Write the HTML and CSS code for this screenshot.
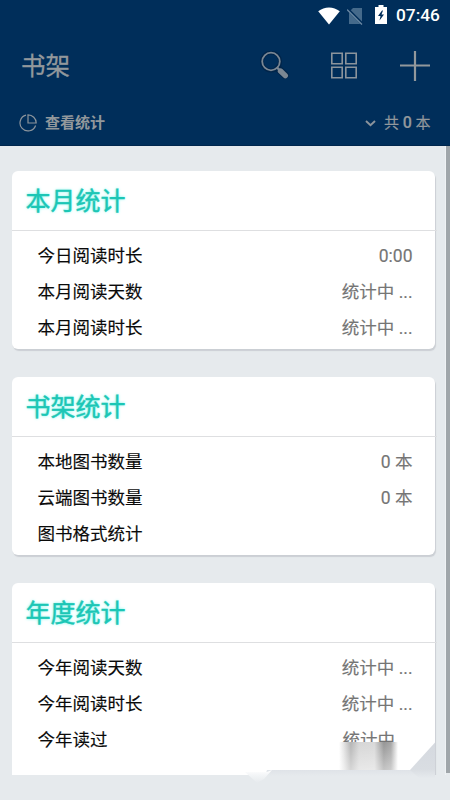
FILE: index.html
```html
<!DOCTYPE html>
<html lang="zh-CN">
<head>
<meta charset="utf-8">
<title>书架</title>
<link rel="stylesheet" href="styles.css">
</head>
<body>
<div class="app">
  <header class="header">
    <div class="status">
      <svg class="wifi" width="22" height="18" viewBox="0 0 22 18"><path d="M0.2 4.3C6.500-.9 15.500-.9 21.800 4.300L11 17.600Z" fill="#fff"/></svg>
      <svg class="sim" width="17" height="18" viewBox="0 0 17 18"><path d="M6 1h9v16H2V5Z" fill="#456a8b"/><path d="M0 1.500L16 17.500" stroke="#002e5a" stroke-width="3"/><path d="M0 2.500L15 17.500" stroke="#6c89a3" stroke-width="1.300"/></svg>
      <svg class="battery" width="12" height="19" viewBox="0 0 12 19"><path d="M3.500 0h5v2H12v17H0V2h3.500Z" fill="#fff"/><path d="M7 5.500L3 11h2.500L4.500 15.500L9 9.500H6.500L8 5.500Z" fill="#002e5a"/></svg>
      <span class="clock">07:46</span>
    </div>
    <div class="toolbar">
      <h1 class="page-title">书架</h1>
      <svg class="search" width="30" height="30" viewBox="0 0 30 30" fill="none"><circle cx="11" cy="10.500" r="9" stroke="#00254a" stroke-width="4"/><path d="M18 17.500L25 24" stroke="#00254a" stroke-width="7.500" stroke-linecap="round"/><circle cx="11" cy="10.500" r="8.800" stroke="#7b8793" stroke-width="1.800"/><path d="M17 16.500L21 20.500" stroke="#7b8793" stroke-width="2.400"/><path d="M20.500 20L25.300 24.600" stroke="#7b8793" stroke-width="5.400" stroke-linecap="round"/></svg>
      <svg class="grid" width="28" height="28" viewBox="0 0 28 28" fill="none" stroke="#8b949c" stroke-width="1.600"><path d="M1.800 1.300h10.400v10.400H1.800ZM15.800 1.300h10.400v10.400H15.800ZM1.800 15.300h10.400v10.400H1.800ZM15.800 15.300h10.400v10.400H15.800Z"/></svg>
      <svg class="plus" width="30" height="30" viewBox="0 0 30 30"><path d="M15 0v30M0 14.500h30" stroke="#92989c" stroke-width="2.200"/></svg>
    </div>
    <div class="summary">
      <svg class="pie" width="18" height="18" viewBox="0 0 18 18" fill="none" stroke="#8b949c" stroke-width="1.200"><path d="M7 1.200A8 8 0 1 0 16.600 11.500"/><path d="M9 .8V9h8.200A8.200 8.200 0 0 0 9 .8Z"/></svg>
      <span class="view">查看统计</span>
      <svg class="chevron" width="11" height="7" viewBox="0 0 11 7" fill="none" stroke="#8b949c" stroke-width="1.900"><path d="M1 1l4.500 4.300L10 1"/></svg>
      <span class="count">共 <b>0</b> 本</span>
    </div>
  </header>
  <main class="content">
    <div class="cards">
      <section class="card">
        <h2>本月统计</h2>
        <ul>
          <li><span>今日阅读时长</span><em>0:00</em></li>
          <li><span>本月阅读天数</span><em>统计中 ...</em></li>
          <li><span>本月阅读时长</span><em>统计中 ...</em></li>
        </ul>
      </section>
      <section class="card">
        <h2>书架统计</h2>
        <ul>
          <li><span>本地图书数量</span><em>0 本</em></li>
          <li><span>云端图书数量</span><em>0 本</em></li>
          <li><span>图书格式统计</span></li>
        </ul>
      </section>
      <section class="card last">
        <h2>年度统计</h2>
        <ul>
          <li><span>今年阅读天数</span><em>统计中 ...</em></li>
          <li><span>今年阅读时长</span><em>统计中 ...</em></li>
          <li><span>今年读过</span><em>统计中</em></li>
        </ul>
      </section>
    </div>
    <div class="scrollbar"></div>
  </main>
  <svg class="fade" width="205" height="64" viewBox="0 0 205 64">
    <defs>
      <linearGradient id="streak" x1="0" x2="1" y1="0" y2="0">
        <stop offset="0" stop-color="#fff"/><stop offset=".08" stop-color="#e4e4e4"/><stop offset=".2" stop-color="#b4b4b4"/><stop offset=".34" stop-color="#d6d6d6"/><stop offset=".6" stop-color="#d8d8d8"/><stop offset=".76" stop-color="#959595"/><stop offset=".88" stop-color="#a5a5a5"/><stop offset="1" stop-color="#fff"/>
      </linearGradient>
      <linearGradient id="lift" x1="0" x2="0" y1="0" y2="1">
        <stop offset="0" stop-color="#fff" stop-opacity="0"/><stop offset="1" stop-color="#fff" stop-opacity=".45"/>
      </linearGradient>
      <linearGradient id="corner" x1="0" x2="0" y1="0" y2="1">
        <stop offset="0" stop-color="#d5d9df"/><stop offset=".75" stop-color="#d9dde2"/><stop offset="1" stop-color="#e6eaed"/>
      </linearGradient>
      <linearGradient id="edge" x1="0" x2="0" y1="0" y2="1">
        <stop offset="0" stop-color="#dfe3e8"/><stop offset="1" stop-color="#e6eaed"/>
      </linearGradient>
      <linearGradient id="notch" x1="0" x2="0" y1="0" y2="1">
        <stop offset="0" stop-color="#fff"/><stop offset=".4" stop-color="#f3f5f7"/><stop offset="1" stop-color="#e6eaed"/>
      </linearGradient>
    </defs>
    <path d="M95 6h75v28H95Z" fill="#fff"/>
    <path d="M94 6h59v28H94Z" fill="url(#streak)"/>
    <path d="M94 6h59v28H94Z" fill="url(#lift)"/>
    <path d="M22 34H190V40H20Z" fill="url(#edge)"/>
    <path d="M0 36H22L27 34L19 43L12 47Z" fill="url(#notch)"/>
    <path d="M165 34L190 6.500V42H174Z" fill="url(#corner)"/>
  </svg>
</div>
</body>
</html>
```
FILE: styles.css
```css
* { box-sizing: border-box; }
body {
  margin: 0;
  font-family: Roboto, "Noto Sans CJK SC", sans-serif;
}
h1, h2, ul { margin: 0; padding: 0; font-weight: 400; }
em { font-style: normal; }
svg { display: block; flex: none; }
.app {
  position: relative;
  width: 450px;
  height: 800px;
  overflow: hidden;
  background: #e6eaed;
}
.header {
  height: 146px;
  background: #002e5a;
  color: #92989c;
  border-bottom: 1px solid #00264d;
}
.status {
  height: 31px;
  display: flex;
  align-items: center;
  padding-left: 318px;
  color: #fff;
}
.sim { margin-left: 7px; }
.battery { margin-left: 11px; margin-top: -2px; }
.clock { margin-left: 9px; font-size: 17.3px; font-weight: 500; line-height: 31px; }
.toolbar {
  height: 69px;
  display: flex;
  align-items: center;
  padding: 0 20px 0 21px;
}
.page-title { font-size: 24.500px; line-height: 36px; flex: 1; padding-top: 2px; -webkit-text-stroke: .3px; }
.grid { margin-left: 40px; }
.plus { margin-left: 42px; }
.summary {
  height: 46px;
  display: flex;
  align-items: center;
  padding: 0 19.500px 0 19px;
  font-size: 15px;
}
.view, .count { line-height: 22px; }
.view { margin-left: 8px; flex: 1; font-weight: 700; }
.chevron { margin-right: 8px; }
.count { -webkit-text-stroke: .2px; }
.count b { font-weight: 500; font-size: 16px; }
.content {
  height: 629px;
  display: flex;
  overflow: hidden;
}
.cards { flex: 1; padding: 25px 10px 0 12px; border-right: 1px solid #eff2f4; }
.card {
  width: 423px;
  height: 178px;
  margin-bottom: 28px;
  border-radius: 6px;
  background: #fff;
  box-shadow: 1px 2px 1px #cbcfd4;
}
.card.last { height: 230px; }
.card h2 {
  height: 60px;
  width: 425px;
  padding: 1px 0 0 13.500px;
  font-size: 25px;
  line-height: 60px;
  color: #1cc6b5;
  -webkit-text-stroke: .4px #1cc6b5;
  text-shadow: 0 0 3px #65f5e9;
  border-bottom: 1px solid #dedfe1;
}
.card ul { padding: 7px 22.500px 0 25.500px; list-style: none; }
.card li {
  height: 36px;
  display: flex;
  justify-content: space-between;
  font-size: 17.5px;
  line-height: 36px;
  color: #0a0a0a;
  -webkit-text-stroke: .15px;
}
.card em { color: #757575; }
.card.last li:last-child em { width: 70px; }
.scrollbar { width: 5px; height: 627px; background: #a0a6aa; }
.fade { position: absolute; left: 245px; top: 736px; }
```
